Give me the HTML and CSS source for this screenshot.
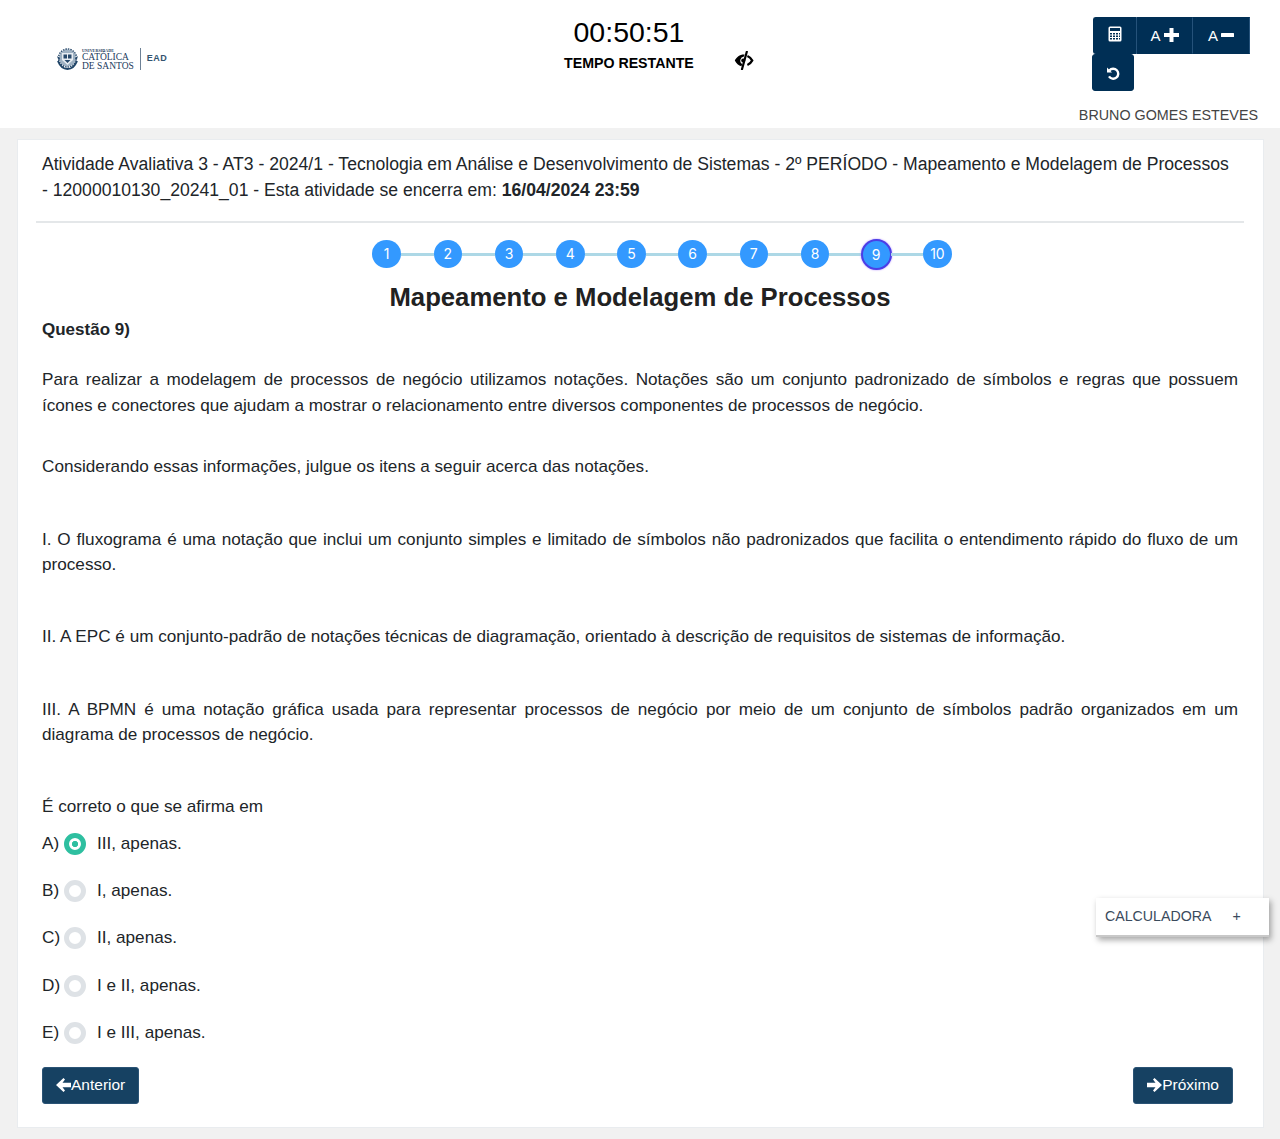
FILE: index.html
```html
<!DOCTYPE html>
<html lang="pt-BR">
<head>
<meta charset="utf-8">
<title>Atividade Avaliativa</title>
<link rel="stylesheet" href="styles.css">
</head>
<body>
<header class="top">
  <div class="logo">
    <svg class="crest" width="21" height="23" viewBox="0 0 21 23"><circle cx="10.500" cy="10" r="8.500" fill="#9fb2c3"/><circle cx="10.500" cy="10" r="9" fill="none" stroke="#27496b" stroke-width="1.400" stroke-dasharray="1.500 1"/><path d="M5 5h11v7l-5.500 5L5 12z" fill="#e8edf2"/><path d="M6.500 6.500h3.500v4H6.500zM11 6.500h3.500v4H11zM7.500 12h6l-3 3z" fill="#27496b"/><path d="M1 13c2 5 5 8 9.500 8s7.500-3 9.500-8" stroke="#1f4467" stroke-width="2" fill="none"/><path d="M0 8l3 2-1 3zM21 8l-3 2 1 3z" fill="#27496b"/></svg>
    <div class="wordmark">
      <span class="w-uni">UNIVERSIDADE</span>
      <span class="w-cat">CATÓLICA</span>
      <span class="w-cat">DE SANTOS</span>
    </div>
    <span class="logo-sep"></span>
    <span class="w-ead">EAD</span>
  </div>
  <div class="timer">
    <div class="clock">00:50:51</div>
    <div class="timer-row">
      <span class="timer-label">TEMPO RESTANTE</span>
      <svg class="eye" width="20" height="19" viewBox="0 0 20 19"><path d="M10 3.500C5.500 3.500 2.500 6.200.8 9.500 2.300 12.500 4.500 14.500 7.500 15.200L8.200 13A4 4 0 0 1 9.900 5.600L10.600 3.500z" fill="#000"/><circle cx="9.200" cy="9.500" r="2" fill="#000"/><path d="M12.800 .8 8 18.200" stroke="#000" stroke-width="2.200" stroke-linecap="round"/><path d="M13.400 5c2.300.9 3.800 2.600 4.800 4.500-1 1.900-2.500 3.600-4.800 4.500" fill="none" stroke="#000" stroke-width="2.400"/></svg>
    </div>
  </div>
  <div class="tools">
    <div class="tool-row">
      <button class="tool tool-calc" type="button" aria-label="Calculadora">
        <svg width="14" height="16" viewBox="0 0 14 16"><rect x=".5" y=".5" width="13" height="15" rx="1.500" fill="#fff"/><rect x="2" y="2" width="10" height="3" fill="#002f55"/><path d="M2 7h2v1.500H2zM5 7h2v1.500H5zM8 7h2v1.500H8zM11 7h1v1.500h-1zM2 9.500h2V11H2zM5 9.500h2V11H5zM8 9.500h2V11H8zM11 9.500h1V11h-1zM2 12h2v1.500H2zM5 12h2v1.500H5zM8 12h2v1.500H8zM11 12h1v1.500h-1z" fill="#002f55"/></svg>
      </button>
      <button class="tool tool-font" type="button"><span>A</span>
        <svg width="15" height="14" viewBox="0 0 15 14"><path d="M5.500 0h4v5H15v4H9.500v5h-4V9H0V5h5.500z" fill="#fff"/></svg>
      </button>
      <button class="tool tool-font tool-last" type="button"><span>A</span>
        <svg width="13" height="12" viewBox="0 0 13 12"><rect y="4" width="13" height="4" rx=".5" fill="#fff"/></svg>
      </button>
    </div>
    <button class="tool tool-undo" type="button" aria-label="Desfazer">
      <svg width="14" height="14" viewBox="0 0 14 14"><path d="M3.400 4.500A5 5 0 1 1 3 10.400" fill="none" stroke="#fff" stroke-width="2.400"/><path d="M1 1.500v5h5z" fill="#fff"/></svg>
    </button>
    <div class="student">BRUNO GOMES ESTEVES</div>
  </div>
</header>

<main class="card">
  <h2 class="activity">Atividade Avaliativa 3 - AT3 - 2024/1 - Tecnologia em Análise e Desenvolvimento de Sistemas - 2º PERÍODO - Mapeamento e Modelagem de Processos - 12000010130_20241_01 - Esta atividade se encerra em: <strong>16/04/2024 23:59</strong></h2>
  <hr class="rule">
  <ol class="steps">
    <li class="step">1</li><li class="link"></li>
    <li class="step">2</li><li class="link"></li>
    <li class="step">3</li><li class="link"></li>
    <li class="step">4</li><li class="link"></li>
    <li class="step">5</li><li class="link"></li>
    <li class="step">6</li><li class="link"></li>
    <li class="step">7</li><li class="link"></li>
    <li class="step">8</li><li class="link"></li>
    <li class="step step-on">9</li><li class="link"></li>
    <li class="step">10</li>
  </ol>
  <h1 class="subject">Mapeamento e Modelagem de Processos</h1>
  <div class="question-no">Questão 9)</div>
  <p class="q q1">Para realizar a modelagem de processos de negócio utilizamos notações. Notações são um conjunto padronizado de símbolos e regras que possuem ícones&nbsp;e conectores que ajudam a mostrar o relacionamento entre diversos componentes de processos de negócio.</p>
  <p class="q q2">Considerando essas informações, julgue os itens a seguir acerca das notações.</p>
  <p class="q q3">I. O fluxograma é uma notação que inclui um conjunto simples e limitado de símbolos não padronizados que facilita o entendimento rápido do fluxo de um processo.</p>
  <p class="q q3b">II. A EPC é um conjunto-padrão de notações técnicas de diagramação, orientado à descrição de requisitos de sistemas de informação.</p>
  <p class="q q3c">III. A BPMN é uma notação gráfica usada para representar processos de negócio por meio de um conjunto de símbolos padrão organizados em um diagrama de processos de negócio.</p>
  <p class="q q4">É correto o que se afirma em</p>
  <ul class="options">
    <li class="option"><span class="opt-letter">A)</span><span class="radio radio-on"></span><span>III, apenas.</span></li>
    <li class="option"><span class="opt-letter">B)</span><span class="radio"></span><span>I, apenas.</span></li>
    <li class="option"><span class="opt-letter">C)</span><span class="radio"></span><span>II, apenas.</span></li>
    <li class="option"><span class="opt-letter">D)</span><span class="radio"></span><span>I e II, apenas.</span></li>
    <li class="option"><span class="opt-letter">E)</span><span class="radio"></span><span>I e III, apenas.</span></li>
  </ul>
  <div class="nav">
    <button class="nav-btn" type="button"><svg width="15" height="14" viewBox="0 0 15 14"><path d="M7.500 0 0 7l7.500 7 1.500-1.500L6.500 9.200H15V4.800H6.500L9 1.500z" fill="#fff"/></svg>Anterior</button>
    <button class="nav-btn" type="button"><svg width="15" height="14" viewBox="0 0 15 14"><path d="M7.500 0 15 7l-7.500 7L6 12.500l2.500-3.300H0V4.800h8.500L6 1.500z" fill="#fff"/></svg>Próximo</button>
  </div>
</main>

<aside class="calc-widget"><span>CALCULADORA</span><span class="calc-plus">+</span></aside>
</body>
</html>
```
FILE: styles.css
```css
* { box-sizing: border-box; }
html, body { margin: 0; padding: 0; }
body {
  position: relative;
  height: 1139px;
  overflow: hidden;
  background: #f1f1f1;
  color: #212529;
  font-family: "Liberation Sans", Arial, sans-serif;
  font-size: 17px;
}
.top {
  height: 128px;
  background: #fff;
  display: flex;
  align-items: flex-start;
}
.logo {
  width: 460px;
  padding: 47px 0 0 57px;
  display: flex;
  align-items: center;
  color: #1a3a5c;
}
.crest { flex: none; }
.wordmark {
  margin: 2px 0 0 4px;
  display: flex;
  flex-direction: column;
  font-family: "Liberation Serif", serif;
  height: 22px;
}
.w-uni { font-size: 4px; line-height: 4px; font-weight: bold; letter-spacing: .1px; }
.w-cat { font-size: 9.500px; line-height: 8.500px; white-space: nowrap; }
.logo-sep { width: 1px; height: 22px; background: #6d8196; margin: 0 6px; }
.w-ead { font-size: 9px; font-weight: bold; letter-spacing: .5px; color: #33536f; margin-top: -2px; }
.timer {
  width: 338px;
  padding-top: 15px;
}
.clock {
  width: 338px;
  text-align: center;
  font-size: 28.500px;
  line-height: 34px;
  color: #000;
}
.timer-row {
  display: flex;
  align-items: center;
  margin-top: 3px;
  height: 22px;
}
.timer-label {
  margin-left: 104px;
  font-size: 14.200px;
  font-weight: bold;
  color: #000;
  white-space: nowrap;
}
.eye { margin-left: 40px; margin-top: -6px; }
.tools {
  flex: 0 0 201px;
  margin-left: auto;
  padding-top: 17px;
  display: flex;
  flex-direction: column;
  align-items: flex-start;
}
.tool-row { display: flex; margin-left: 14px; }
.tool {
  height: 37px;
  border: 1px solid #25527a;
  background: #002f55;
  color: #fff;
  padding: 0;
  display: flex;
  align-items: center;
  justify-content: center;
  font-family: inherit;
  font-size: 15px;
}
.tool-calc { width: 44px; border-radius: 3px 0 0 3px; border-color: #002f55 #25527a #002f55 #002f55; }
.tool-calc svg { margin-top: -3px; }
.tool-font { width: 56.500px; gap: 3px; border-width: 1px 1px 1px 0; border-color: #002f55 #25527a #002f55 #002f55; }
.tool-font span { margin-top: -1px; }
.tool-font svg { margin-top: -2px; }
.tool-undo { width: 42px; margin-left: 13px; border-radius: 3px; border-color: #002f55; }
.student {
  margin: 16px 22px 0 0;
  align-self: flex-end;
  font-size: 14.340px;
  line-height: 17px;
  color: #444;
  white-space: nowrap;
}
.card {
  margin: 11px 16px 0 17px;
  height: 989px;
  background: #fff;
  border: 1px solid #e9ecef;
  padding: 11px 25px 0 24px;
}
.activity {
  margin: 0;
  font-size: 17.600px;
  font-weight: normal;
  line-height: 26px;
  color: #212529;
}
.activity strong { font-weight: bold; }
.rule {
  margin: 18px -6px 0;
  border: 0;
  border-top: 2px solid #e4e7e9;
}
.steps {
  list-style: none;
  margin: 17px 0 0;
  padding: 0 0 0 330.400px;
  display: flex;
  align-items: center;
  height: 28px;
}
.step {
  flex: none;
  width: 28.600px;
  height: 28px;
  border-radius: 50%;
  background: #3399ff;
  color: #fff;
  font-family: Inter, sans-serif;
  font-size: 14px;
  line-height: 28px;
  text-align: center;
}
.step-on {
  width: 31px;
  height: 31px;
  margin: 0 -1.200px;
  line-height: 27px;
  border: 2px solid #4b3ee6;
  box-shadow: 0 0 2px #b28cff;
}
.link {
  flex: none;
  width: 32.600px;
  height: 3px;
  background: #add8e6;
}
.subject {
  margin: 14px 0 0;
  font-size: 25.700px;
  line-height: 30px;
  font-weight: bold;
  text-align: center;
  color: #212121;
}
.question-no {
  margin-top: 8px;
  font-size: 17px;
  line-height: 20px;
  font-weight: bold;
  color: #212529;
}
.q {
  margin: 0;
  font-size: 17.150px;
  line-height: 25.500px;
  text-align: justify;
  color: #212529;
}
.q1 { margin-top: 27px; }
.q2 { margin-top: 35.500px; }
.q3 { margin-top: 47.800px; }
.q3b { margin-top: 46.200px; }
.q3c { margin-top: 47.100px; }
.q4 { margin-top: 46.500px; }
.options { list-style: none; margin: .3px 0 0; padding: 0; }
.option {
  display: flex;
  align-items: center;
  height: 47.200px;
  font-size: 17.150px;
  color: #212529;
}
.opt-letter { width: 21px; }
.radio {
  flex: none;
  width: 22px;
  height: 22px;
  margin: 1px 11px 0 1px;
  border-radius: 50%;
  background: #fff;
  border: 5px solid #dee2e6;
}
.radio-on {
  border-color: #2ebfa0;
  background: radial-gradient(circle, #2ebfa0 0 2.800px, #fff 3.400px);
}
.nav {
  display: flex;
  justify-content: space-between;
  padding-right: 5px;
  margin-top: 11.200px;
}
.nav-btn {
  height: 37px;
  padding: 0 13px 2px;
  display: flex;
  align-items: center;
  background: #164162;
  border: 1px solid #2a5375;
  border-radius: 3px;
  color: #fff;
  font-family: inherit;
  font-size: 15.500px;
}
.calc-widget {
  position: absolute;
  left: 1096px;
  top: 898px;
  width: 173px;
  height: 39px;
  padding: 0 0 2px 9px;
  background: #fff;
  display: flex;
  align-items: center;
  font-size: 14.200px;
  color: #3a4a5c;
  border-bottom: 2px solid #c8c8c8;
  box-shadow: 2px 3px 6px rgba(0,0,0,.35);
}
.calc-plus { margin-left: 21px; }
```
